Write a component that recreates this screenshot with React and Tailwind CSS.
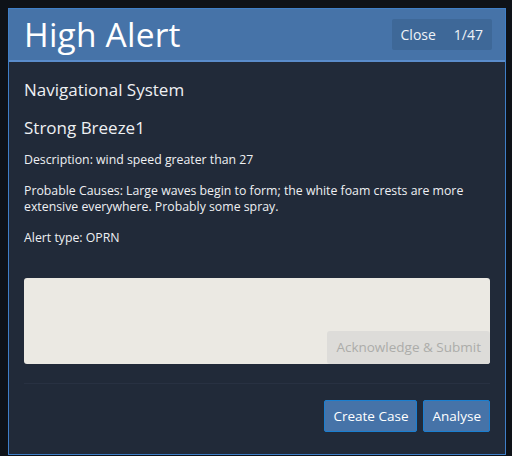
export default function App() {
  return (
    <div className="w-[512px] h-[456px] bg-[#0e1218] p-[8px] pr-[6px] pb-[1px]" style={{ fontFamily: '"Open Sans", sans-serif' }}>
      <div className="h-full flex flex-col border border-[#3f7fc8] bg-[#212a39]">
        <div className="h-[53px] bg-[#4673a8] border-b-2 border-[#5a8ccb] flex items-center justify-between pl-[15px] pr-[13px]">
          <h1 className="text-[33.5px] leading-none text-white tracking-[0.2px]">High Alert</h1>
          <div className="flex items-center h-[31px] bg-[#3e6898] rounded-[2px] text-[14px] text-[#eef2f7] font-medium">
            <span className="pl-[9px] pr-[9px]">Close</span>
            <span className="pl-[9px] pr-[9px]">1/47</span>
          </div>
        </div>
        <div className="flex flex-col px-[15px] text-[#eef0f3] font-medium">
          <div className="text-[17px] mt-[17px] leading-[22px]">Navigational System</div>
          <div className="text-[17px] mt-[16px] leading-[22px]">Strong Breeze1</div>
          <div className="text-[12.3px] mt-[13px] leading-[16px]">Description: wind speed greater than 27</div>
          <div className="text-[12.3px] mt-[15px] leading-[16px]">Probable Causes: Large waves begin to form; the white foam crests are more extensive everywhere. Probably some spray.</div>
          <div className="text-[12.3px] mt-[15px] leading-[16px]">Alert type: OPRN</div>
          <div className="mt-[32px] h-[86px] bg-[#ebe9e3] rounded-[3px] flex items-end justify-end">
            <div className="h-[33px] px-[9px] bg-[#dddcd9] rounded-[3px] text-[13.5px] text-[#acaca9] flex items-center">Acknowledge &amp; Submit</div>
          </div>
          <div className="mt-[19px] border-t border-[#283142]"></div>
          <div className="mt-[16px] flex justify-end gap-[6px]">
            <button className="h-[32px] px-[8px] bg-[#4673a8] border border-[#1a7fd0] rounded-[2px] text-[13.5px] text-white">Create Case</button>
            <button className="h-[32px] px-[8px] bg-[#4673a8] border border-[#1a7fd0] rounded-[2px] text-[13.5px] text-white">Analyse</button>
          </div>
        </div>
      </div>
    </div>
  );
}
